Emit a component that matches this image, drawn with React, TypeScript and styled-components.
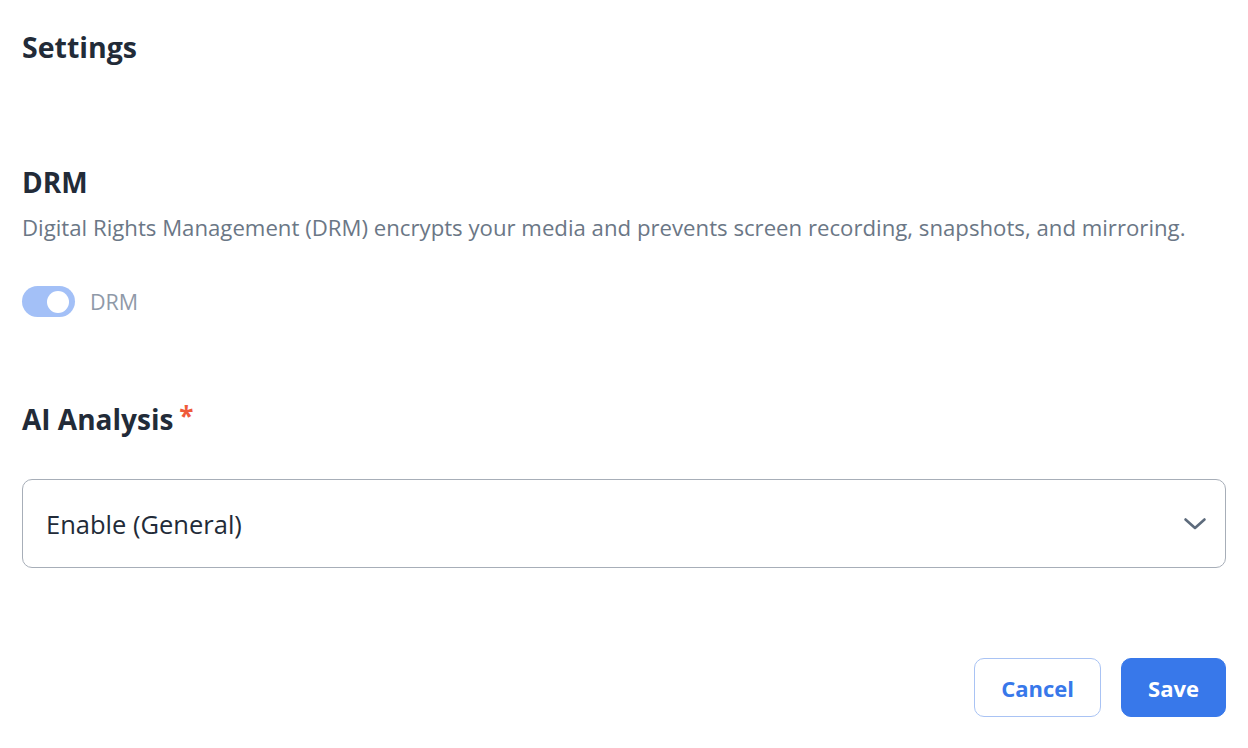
import React from "react";
import styled, { createGlobalStyle } from "styled-components";

const GlobalStyle = createGlobalStyle`
  body {
    margin: 0;
    background: #ffffff;
    font-family: "Open Sans", "Noto Sans", sans-serif;
    color: #222b38;
  }
`;

const Page = styled.div`
  padding: 28px 22px 30px;
  display: flex;
  flex-direction: column;
`;

const PageTitle = styled.h1`
  margin: 0;
  font-size: 28.5px;
  font-weight: 700;
  line-height: 38px;
  color: #222b38;
`;

const Section = styled.section<{ $top: number }>`
  margin-top: ${(p) => p.$top}px;
  display: flex;
  flex-direction: column;
`;

const Heading = styled.h2`
  margin: 0;
  font-size: 28px;
  font-weight: 700;
  line-height: 36px;
  color: #222b38;
  display: flex;
  align-items: center;
  gap: 6px;
`;

const Required = styled.span`
  color: #ef5b3a;
  font-size: 26px;
  line-height: 24px;
  margin-top: -6px;
`;

const Description = styled.p`
  margin: 13px 0 0;
  font-size: 22.2px;
  line-height: 30px;
  color: #6b7786;
`;

const ToggleRow = styled.label`
  margin-top: 43px;
  display: flex;
  align-items: center;
  gap: 15px;
`;

const Track = styled.span<{ $on: boolean }>`
  position: relative;
  width: 53px;
  height: 31px;
  border-radius: 16px;
  background: ${(p) => (p.$on ? "#a3c0f7" : "#d6dbe2")};
`;

const Knob = styled.span<{ $on: boolean }>`
  position: absolute;
  top: 5px;
  left: ${(p) => (p.$on ? "25px" : "5px")};
  width: 22px;
  height: 22px;
  border-radius: 50%;
  background: #ffffff;
`;

const ToggleText = styled.span`
  font-size: 21.5px;
  color: #8f99a8;
`;

const Select = styled.div`
  margin-top: 42px;
  height: 89px;
  box-sizing: border-box;
  border: 1px solid #a7aeb8;
  border-radius: 10px;
  padding: 0 18px 0 23px;
  display: flex;
  align-items: center;
  justify-content: space-between;
`;

const SelectValue = styled.span`
  font-size: 25.5px;
  color: #222b38;
`;

const Actions = styled.div`
  margin-top: 90px;
  display: flex;
  justify-content: flex-end;
  gap: 20px;
`;

const Button = styled.button<{ $primary?: boolean }>`
  height: 59px;
  padding: 0 26px;
  border-radius: 10px;
  font-family: inherit;
  font-size: 22px;
  font-weight: 700;
  cursor: pointer;
  border: 1px solid ${(p) => (p.$primary ? "#3878ea" : "#a9c3f4")};
  background: ${(p) => (p.$primary ? "#3878ea" : "#ffffff")};
  color: ${(p) => (p.$primary ? "#ffffff" : "#3878ea")};
`;

const Chevron = () => (
  <svg width="24" height="14" viewBox="0 0 24 14" fill="none">
    <path
      d="M2.5 2.5l9.5 8.5 9.5-8.5"
      stroke="#5d6b7c"
      strokeWidth="2.6"
      strokeLinecap="round"
      strokeLinejoin="round"
    />
  </svg>
);

export default function App() {
  const drm = true;
  return (
    <>
      <GlobalStyle />
      <Page>
        <PageTitle>Settings</PageTitle>

        <Section $top={98}>
          <Heading>DRM</Heading>
          <Description>
            Digital Rights Management (DRM) encrypts your media and prevents
            screen recording, snapshots, and mirroring.
          </Description>
          <ToggleRow>
            <Track $on={drm}>
              <Knob $on={drm} />
            </Track>
            <ToggleText>DRM</ToggleText>
          </ToggleRow>
        </Section>

        <Section $top={84}>
          <Heading>
            AI Analysis <Required>*</Required>
          </Heading>
          <Select>
            <SelectValue>Enable (General)</SelectValue>
            <Chevron />
          </Select>
        </Section>

        <Actions>
          <Button>Cancel</Button>
          <Button $primary>Save</Button>
        </Actions>
      </Page>
    </>
  );
}
